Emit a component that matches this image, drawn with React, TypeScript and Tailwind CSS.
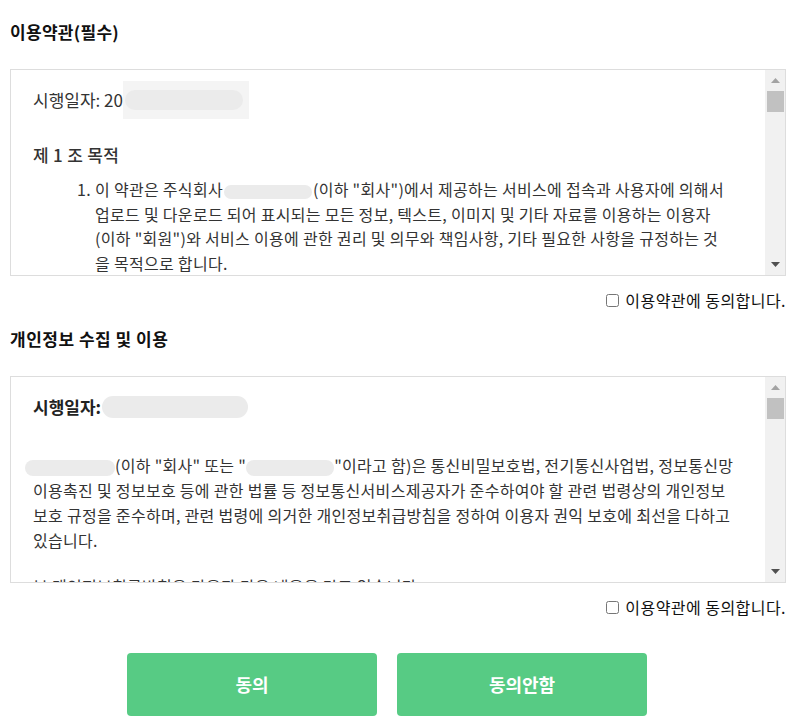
import React from "react";

const font = { fontFamily: '"Noto Sans CJK KR", "Noto Sans", sans-serif' };

function Blob({ w, h = 16, className = "" }: { w: number; h?: number; className?: string }) {
  return (
    <span
      className={"inline-block align-middle rounded-full bg-[#ebebeb] " + className}
      style={{ width: w, height: h }}
    />
  );
}

function ScrollBar() {
  return (
    <div className="w-[20px] shrink-0 bg-[#f1f1f1] flex flex-col pl-[2px] pr-[1px]">
      <div className="h-[21px] flex items-center justify-center">
        <svg width="9" height="5" viewBox="0 0 9 5">
          <path d="M0 5 L4.5 0 L9 5 Z" fill="#a3a3a3" />
        </svg>
      </div>
      <div className="h-[21px] bg-[#c1c1c1]" />
      <div className="flex-1" />
      <div className="h-[21px] flex items-center justify-center">
        <svg width="9" height="5" viewBox="0 0 9 5">
          <path d="M0 0 L4.5 5 L9 0 Z" fill="#505050" />
        </svg>
      </div>
    </div>
  );
}

function Agree() {
  return (
    <label className="mt-[12px] h-[24px] flex items-center justify-end gap-[6px] text-[16px] tracking-[0.45px] text-[#111]">
      <input type="checkbox" className="w-[13px] h-[13px] m-0" />
      <span>이용약관에 동의합니다.</span>
    </label>
  );
}

export default function App() {
  return (
    <div className="w-[796px] bg-white px-[10px] pt-[20px] pb-[7px]" style={font}>
      <h2 className="text-[17px] font-bold leading-[24px] tracking-[0.3px] text-[#111]">이용약관(필수)</h2>

      <div className="mt-[25px] h-[207px] border border-[#dddddd] flex">
        <div className="flex-1 overflow-hidden pl-[22px] pt-[18px] text-[#333]">
          <div className="h-[24px] flex items-center text-[17px]">
            <span>시행일자: 20</span>
            <span className="inline-flex items-center bg-[#f4f4f4] h-[38px] w-[126px] pl-[2px]">
              <Blob w={118} h={20} className="bg-[#e8e8e8]" />
            </span>
          </div>
          <div className="mt-[31px] h-[24px] leading-[24px] text-[17px] font-medium tracking-[0.3px]">제 1 조 목적</div>
          <ol className="mt-[10px] pl-[44px] text-[16px] tracking-[0.3px] leading-[24.5px] list-none">
            <li className="flex">
              <span className="w-[18px] shrink-0">1.</span>
              <div>
                <div className="whitespace-nowrap">
                  이 약관은 주식회사<Blob w={88} h={14} className="mx-[1px]" />(이하 "회사")에서 제공하는 서비스에 접속과 사용자에 의해서
                </div>
                <div className="whitespace-nowrap">
                  업로드 및 다운로드 되어 표시되는 모든 정보, 텍스트, 이미지 및 기타 자료를 이용하는 이용자
                </div>
                <div className="whitespace-nowrap">
                  (이하 "회원")와 서비스 이용에 관한 권리 및 의무와 책임사항, 기타 필요한 사항을 규정하는 것
                </div>
                <div className="whitespace-nowrap">을 목적으로 합니다.</div>
              </div>
            </li>
          </ol>
        </div>
        <ScrollBar />
      </div>

      <Agree />

      <h2 className="mt-[15px] text-[17px] font-bold leading-[24px] tracking-[0.5px] text-[#111]">개인정보 수집 및 이용</h2>

      <div className="mt-[25px] h-[207px] border border-[#dddddd] flex">
        <div className="flex-1 overflow-hidden pl-[22px] pt-[18px] text-[#333]">
          <div className="h-[24px] flex items-center text-[17px] font-semibold text-[#222]">
            <span>시행일자:</span>
            <Blob w={146} h={22} className="ml-[1px]" />
          </div>
          <div className="mt-[34px] text-[16px] tracking-[0.3px] leading-[25px]">
            <div className="whitespace-nowrap -ml-[8px]">
              <Blob w={90} h={16} />(이하 "회사" 또는 "<Blob w={88} h={16} />"이라고 함)은 통신비밀보호법, 전기통신사업법, 정보통신망
            </div>
            <div className="whitespace-nowrap">
              이용촉진 및 정보보호 등에 관한 법률 등 정보통신서비스제공자가 준수하여야 할 관련 법령상의 개인정보
            </div>
            <div className="whitespace-nowrap">
              보호 규정을 준수하며, 관련 법령에 의거한 개인정보취급방침을 정하여 이용자 권익 보호에 최선을 다하고
            </div>
            <div className="whitespace-nowrap">있습니다.</div>
            <div className="h-[21px]" />
            <div className="whitespace-nowrap">본 개인정보취급방침은 다음과 같은 내용을 담고 있습니다.</div>
          </div>
        </div>
        <ScrollBar />
      </div>

      <Agree />

      <div className="mt-[34px] flex gap-[20px] pl-[117px]">
        <button className="w-[250px] h-[63px] rounded-[4px] bg-[#57cb84] text-white text-[18px] font-bold">
          동의
        </button>
        <button className="w-[250px] h-[63px] rounded-[4px] bg-[#57cb84] text-white text-[18px] font-bold">
          동의안함
        </button>
      </div>
    </div>
  );
}
